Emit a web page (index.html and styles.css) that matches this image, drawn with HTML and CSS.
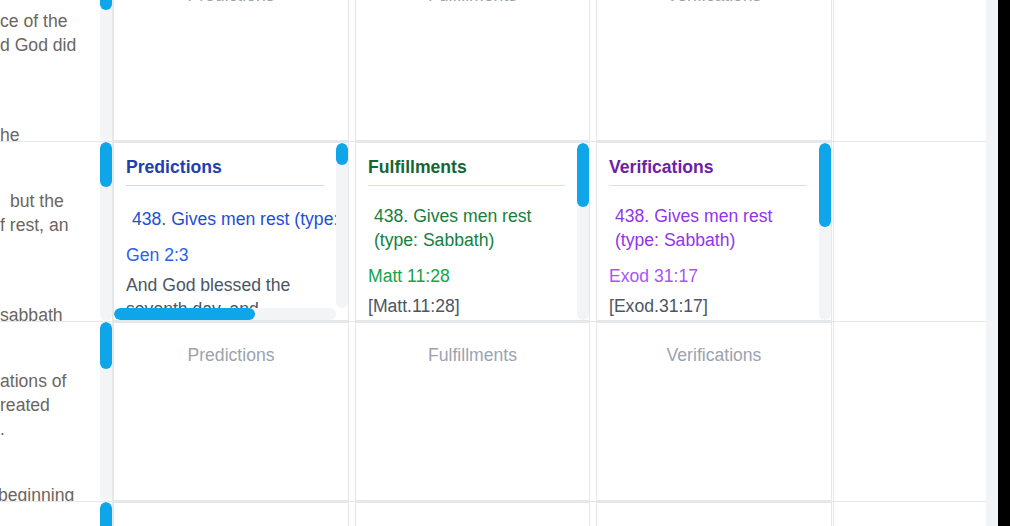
FILE: index.html
```html
<!DOCTYPE html>
<html lang="en">
<head>
<meta charset="utf-8">
<title>Prophecies – Predictions, Fulfillments, Verifications</title>
<link rel="stylesheet" href="styles.css">
</head>
<body>
<div class="app">
  <main class="viewport">
    <div class="table">

      <div class="row">
        <div class="lead">
          <div class="lead-text">
            <div class="verse">
              <div class="ln">ce of the</div>
              <div class="ln">d God did</div>
            </div>
            <div class="note">
              <div class="ln">he</div>
            </div>
          </div>
          <div class="sb sb--v"><div class="sb-thumb" style="height:48px"></div></div>
        </div>
        <div class="cell"><div class="tile tile--empty">Predictions</div></div>
        <div class="cell"><div class="tile tile--empty">Fulfillments</div></div>
        <div class="cell cell--last"><div class="tile tile--empty">Verifications</div></div>
        <div class="spare"></div>
      </div>

      <div class="row">
        <div class="lead">
          <div class="lead-text">
            <div class="verse">
              <div class="ln ln--in">but the</div>
              <div class="ln">f rest, an</div>
            </div>
            <div class="note">
              <div class="ln">sabbath</div>
            </div>
          </div>
          <div class="sb sb--v"><div class="sb-thumb" style="height:45px"></div></div>
        </div>
        <div class="cell">
          <div class="tile tile--scroll tile--both tile--pred">
            <div class="tile-body">
              <h3 class="tile-title">Predictions</h3>
              <p class="item">438. Gives men rest (type: Sabbath)</p>
              <p class="ref">Gen 2:3</p>
              <p class="text">And God blessed the seventh day, and</p>
            </div>
            <div class="sb sb--v"><div class="sb-thumb" style="height:22px"></div></div>
            <div class="sb sb--h"><div class="sb-thumb" style="width:141px"></div></div>
            <div class="sb-corner"></div>
          </div>
        </div>
        <div class="cell">
          <div class="tile tile--scroll tile--ful">
            <div class="tile-body">
              <h3 class="tile-title">Fulfillments</h3>
              <p class="item">438. Gives men rest (type: Sabbath)</p>
              <p class="ref">Matt 11:28</p>
              <p class="text">[Matt.11:28]</p>
            </div>
            <div class="sb sb--v"><div class="sb-thumb" style="height:64px"></div></div>
          </div>
        </div>
        <div class="cell cell--last">
          <div class="tile tile--scroll tile--ver">
            <div class="tile-body">
              <h3 class="tile-title">Verifications</h3>
              <p class="item">438. Gives men rest (type: Sabbath)</p>
              <p class="ref">Exod 31:17</p>
              <p class="text">[Exod.31:17]</p>
            </div>
            <div class="sb sb--v"><div class="sb-thumb" style="height:84px"></div></div>
          </div>
        </div>
        <div class="spare"></div>
      </div>

      <div class="row">
        <div class="lead">
          <div class="lead-text">
            <div class="verse">
              <div class="ln">ations of</div>
              <div class="ln">reated</div>
              <div class="ln">.</div>
            </div>
            <div class="note">
              <div class="ln ln--out">beginning</div>
            </div>
          </div>
          <div class="sb sb--v"><div class="sb-thumb" style="height:47px"></div></div>
        </div>
        <div class="cell"><div class="tile tile--empty">Predictions</div></div>
        <div class="cell"><div class="tile tile--empty">Fulfillments</div></div>
        <div class="cell cell--last"><div class="tile tile--empty">Verifications</div></div>
        <div class="spare"></div>
      </div>

      <div class="row">
        <div class="lead">
          <div class="lead-text"></div>
          <div class="sb sb--v"><div class="sb-thumb" style="height:47px"></div></div>
        </div>
        <div class="cell"><div class="tile tile--empty"></div></div>
        <div class="cell"><div class="tile tile--empty"></div></div>
        <div class="cell cell--last"><div class="tile tile--empty"></div></div>
        <div class="spare"></div>
      </div>

    </div>
  </main>
  <div class="page-track"></div>
  <div class="edge"></div>
</div>
</body>
</html>
```

FILE: styles.css
```css
* {
  box-sizing: border-box;
}

html,
body {
  margin: 0;
  padding: 0;
}

body {
  font-family: "Liberation Sans", Arial, sans-serif;
  font-size: 17.6px;
  line-height: 24px;
  color: #4b5563;
  background: #ffffff;
  overflow: hidden;
}

.app {
  display: flex;
  height: 526px;
}

.viewport {
  flex: none;
  width: 986px;
  height: 526px;
  overflow: hidden;
  background: #ffffff;
}

.page-track {
  flex: none;
  width: 12px;
  background: #f3f4f6;
}

.edge {
  flex: 1;
  background: #000000;
}

/* the table is scrolled down a little */
.table {
  margin-top: -39px;
}

.row {
  display: grid;
  grid-template-columns: 113px 242px 241px 238px 1fr;
  height: 180px;
  border-top: 1px solid #e5e7eb;
}

/* left text column */
.lead {
  display: grid;
  grid-template-columns: minmax(0, 1fr) 12px;
  min-height: 0;
  border-right: 1px solid #e5e7eb;
  color: #6b6661;
}

.lead-text {
  min-width: 0;
  overflow: hidden;
  padding-top: 47px;
  white-space: nowrap;
}

.verse {
  height: 96px;
}

.ln {
  height: 24px;
}

.ln--in {
  padding-left: 10px;
}

.ln--out {
  margin-left: -2px;
}

.note {
  margin-top: 18px;
}

/* tiles */
.cell {
  min-width: 0;
  min-height: 0;
  padding-right: 6px;
}

.cell--last {
  padding-right: 1px;
  border-right: 1px solid #e5e7eb;
}

.tile {
  height: 100%;
  border: 1px solid #e5e7eb;
  background: #ffffff;
}

.tile--empty {
  padding-top: 20px;
  text-align: center;
  color: #9ca3af;
}

.tile--scroll {
  display: grid;
  grid-template-columns: minmax(0, 1fr) 12px;
  grid-template-rows: minmax(0, 1fr);
}

.tile--both {
  grid-template-rows: minmax(0, 1fr) 12px;
}

.tile-body {
  min-width: 0;
  min-height: 0;
  overflow: hidden;
  padding: 12px 12px 0;
}

.tile-title {
  margin: 0;
  padding-bottom: 6px;
  font-size: 17.6px;
  line-height: 24px;
  font-weight: 700;
  border-bottom: 1px solid #e5e7eb;
}

.item {
  margin: 18px 0 0;
  padding-left: 6px;
}

.ref {
  margin: 12px 0 0;
}

.text {
  margin: 6px 0 0;
  color: #4b5563;
}

.tile--pred .tile-title {
  color: #1e40af;
  border-bottom-color: #bfdbfe;
}

.tile--pred .item {
  margin-top: 21px;
  white-space: nowrap;
  color: #1d4ed8;
}

.tile--pred .ref {
  color: #2563eb;
}

.tile--ful .tile-title {
  color: #166534;
  border-bottom-color: #bbf7d0;
}

.tile--ful .item {
  color: #15803d;
}

.tile--ful .ref {
  color: #16a34a;
}

.tile--ver .tile-title {
  color: #6b21a8;
  border-bottom-color: #e9d5ff;
}

.tile--ver .item {
  color: #9333ea;
}

.tile--ver .ref {
  color: #a855f7;
}

/* scrollbars */
.sb {
  display: flex;
  background: #f3f4f6;
  border-radius: 6px;
  overflow: hidden;
}

.sb--v {
  flex-direction: column;
}

.sb--h {
  flex-direction: row;
}

.sb-thumb {
  flex: none;
  background: #0ea5e9;
  border-radius: 6px;
}

.sb--v .sb-thumb {
  width: 100%;
}

.sb--h .sb-thumb {
  height: 100%;
}

.sb-corner {
  background: transparent;
}
```
